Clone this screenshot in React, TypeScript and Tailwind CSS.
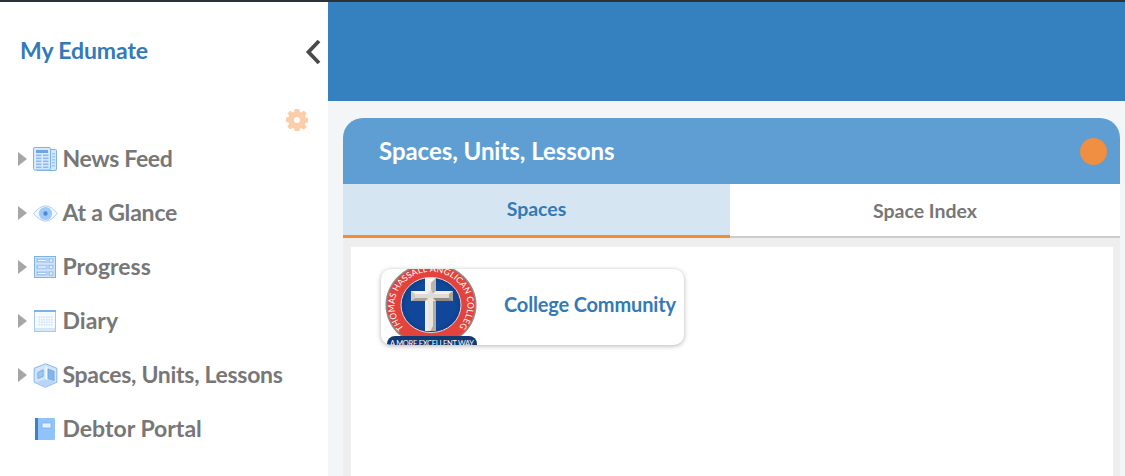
const Stroke = "#7fb2e8";

function NewsIcon() {
  return (
    <svg width="24" height="24" viewBox="0 0 24 24">
      <path d="M17 2.500h5.500a1 1 0 0 1 1 1V22a1.500 1.500 0 0 1-1.500 1.500H4" fill="#d5e7fb" stroke={Stroke} />
      <rect x="0.500" y="0.500" width="17" height="22.500" rx="1.500" fill="#d9eafc" stroke={Stroke} />
      <rect x="3" y="3" width="12" height="3" fill="#6ea5e2" />
      {[8, 11, 14, 17, 20].map((y) => (
        <g key={y}>
          <rect x="3" y={y - 0.5} width="5.500" height="1.600" fill="#8dbbee" />
          <rect x="10" y={y - 0.5} width="5.500" height="1.600" fill="#8dbbee" />
        </g>
      ))}
      {[6, 9, 12, 15, 18].map((y) => (
        <rect key={y} x="19" y={y} width="3" height="1.400" fill="#9cc5f1" />
      ))}
    </svg>
  );
}

function EyeIcon() {
  return (
    <svg width="25" height="17" viewBox="0 0 26 18">
      <path d="M0.700 9C5 3.500 9 1 13 1s8 2.500 12.300 8C21 14.500 17 17 13 17S5 14.500 0.700 9Z" fill="#f5faff" stroke="#8fbdee" strokeWidth="0.800" />
      <circle cx="13" cy="9" r="7" fill="#9ecbf9" />
      <circle cx="13" cy="9" r="2.300" fill="#4b8ad2" />
    </svg>
  );
}

function ProgressIcon() {
  return (
    <svg width="22" height="22" viewBox="0 0 22 22">
      <rect x="0.500" y="0.500" width="21" height="21" fill="#cfe3fa" stroke={Stroke} />
      {[2, 8.500, 15].map((y) => (
        <g key={y}>
          <rect x="2" y={y} width="18" height="5" fill="#b4d4f6" />
          <rect x="3.500" y={y + 1.500} width="9" height="2" fill="#f4f9ff" stroke="#7aa9df" strokeWidth="0.500" />
          <rect x="15.500" y={y + 1} width="3" height="3" fill="#e9f3fd" stroke="#7aa9df" strokeWidth="0.500" />
        </g>
      ))}
    </svg>
  );
}

function DiaryIcon() {
  const xs = [4.500, 7, 9.500, 12, 14.500, 17];
  return (
    <svg width="22" height="22" viewBox="0 0 22 22">
      <rect x="0.500" y="0.500" width="21" height="21" fill="#f5faff" stroke="#a4cbf3" />
      <rect x="0" y="0" width="22" height="2" fill="#7fb2e8" />
      <rect x="1" y="18" width="20" height="3" fill="#d3e6fa" />
      {xs.map((x) =>
        [6.500, 9, 11.500, 14].map((y) => (
          <rect key={`${x}-${y}`} x={x} y={y} width="1.600" height="1.600" fill="#d0e5fa" />
        ))
      )}
    </svg>
  );
}

function CubeIcon() {
  return (
    <svg width="25" height="25" viewBox="0 0 26 26">
      <path d="M13 0.800 24.800 5.500V20L13 25.200 1.200 20V5.500Z" fill="#d2e6fb" stroke={Stroke} />
      <path d="M13 3.500 15 4.500V18L13 20Z" fill="#f4f9ff" />
      <path d="M15.500 6 22 8.500V18.500L15.500 16.500Z" fill="#80b5ee" stroke="#5f97d8" strokeWidth="0.500" />
      <path d="M10.500 7 10.500 14 5 16V10Z" fill="#9fc8f3" stroke="#5f97d8" strokeWidth="0.700" />
      <path d="M2 20 13 16.800 24 20 13 25Z" fill="#b7d6f7" />
    </svg>
  );
}

function BookIcon() {
  return (
    <svg width="20" height="22" viewBox="0 0 20 22">
      <rect x="0" y="0" width="20" height="22" rx="1" fill="#90c3fa" />
      <rect x="0" y="0" width="3" height="22" fill="#3f7fc4" />
      <rect x="7" y="5" width="9" height="5" fill="#e4f0fc" stroke="#7aa9df" strokeWidth="0.700" />
    </svg>
  );
}

function Crest() {
  return (
    <svg width="104" height="76" viewBox="0 0 104 76" className="block shrink-0">
      <defs>
        <radialGradient id="crest-blue">
          <stop offset="0.8" stopColor="#10479a" />
          <stop offset="1" stopColor="#0d3f8c" />
        </radialGradient>
      </defs>
      <g transform="translate(50 36) scale(1 0.92)">
        <circle r="45.500" fill="#8f8a84" />
        <circle r="44" fill="#e2433c" />
        <circle r="30" fill="url(#crest-blue)" stroke="#eedbd6" strokeWidth="1" />
        <path id="crest-arc" d="M-27 25A36.500 36.500 0 1 1 27 25" fill="none" />
        <text fontFamily="Lato, sans-serif" fontSize="9" fill="#fff" textLength="172">
          <textPath href="#crest-arc">THOMAS HASSALL ANGLICAN COLLEGE</textPath>
        </text>
      </g>
      <path d="M44 9h11v13h17v10H55v30H44V32H30V22h14Z" fill="#dfdbd4" />
      <path d="M44 9h11l-5.500 5Z" fill="#f7f5f1" />
      <path d="M44 9v13l3 3 3-5v-6Z" fill="#f2efea" />
      <path d="M55 9v13l-3 3-2-5v-6Z" fill="#b9b4ad" />
      <path d="M30 22h14l3 3H34Z" fill="#f7f5f1" />
      <path d="M55 22h17l-4 3H52Z" fill="#f2efea" />
      <path d="M30 32l4-3h13l-3 3Z" fill="#a8a39c" />
      <path d="M72 32l-4-3H52l3 3Z" fill="#8f8a83" />
      <path d="M72 22v10l-4-3v-4Z" fill="#a8a39c" />
      <path d="M30 22v10l4-3v-4Z" fill="#d0ccc5" />
      <path d="M47 29h5v28l-2.500 4-2.500-4Z" fill="#e8e4de" />
      <path d="M52 32h3v30l-5.500 0 2.500-5Z" fill="#b0aba4" />
      <path d="M44 32h3v25l2.500 5H44Z" fill="#efece7" />
      <rect x="6" y="67" width="90" height="20" rx="8" fill="#123a73" />
      <text x="51" y="77" textAnchor="middle" fontFamily="Lato, sans-serif" fontSize="7.500" fill="#fff" textLength="84">
        A MORE EXCELLENT WAY
      </text>
    </svg>
  );
}

const items = [
  { label: "News Feed", icon: <NewsIcon />, arrow: true, spacing: "tracking-[-0.35px]" },
  { label: "At a Glance", icon: <EyeIcon />, arrow: true, spacing: "tracking-[-0.2px]" },
  { label: "Progress", icon: <ProgressIcon />, arrow: true, spacing: "" },
  { label: "Diary", icon: <DiaryIcon />, arrow: true, spacing: "" },
  { label: "Spaces, Units, Lessons", icon: <CubeIcon />, arrow: true, spacing: "tracking-[-0.3px]" },
  { label: "Debtor Portal", icon: <BookIcon />, arrow: false, spacing: "" },
];

export default function App() {
  return (
    <div className="h-[476px] w-[1125px] overflow-hidden bg-white font-['Lato',sans-serif]">
      <div className="h-[2px] bg-[#2d3238]" />
      <div className="flex h-[474px]">
        <aside className="flex w-[328px] shrink-0 flex-col bg-white">
          <div className="flex h-[99px] items-start justify-between pl-[20px] pr-[7px]">
            <span className="mt-[33px] text-[23px] leading-[30px] font-bold tracking-[-0.1px] text-[#337ab7]">My Edumate</span>
            <svg width="16" height="26" viewBox="0 0 16 26" className="mt-[37px]">
              <path d="M14 2 3.500 13 14 24" fill="none" stroke="#4a4a4a" strokeWidth="3.800" />
            </svg>
          </div>
          <div className="flex h-[31px] justify-end pr-[20px] pt-[8px]">
            <svg width="22" height="22" viewBox="0 0 24 24">
              <path
                fill="#fbcda9"
                fillRule="evenodd"
                d="M9.500 0h5l.6 3.200 1.700.7L19.500 2l3 3-1.900 2.700.7 1.700 3.200.6v4.500l-3.200.6-.7 1.700 1.900 2.700-3 3-2.700-1.900-1.700.7-.6 3.200h-5l-.6-3.200-1.700-.7L4.500 22l-3-3 1.900-2.700-.7-1.700L-.5 14v-4.500l3.200-.6.7-1.700L1.500 5l3-3 2.700 1.900 1.700-.7ZM12 8.700a3.300 3.300 0 1 0 0 6.600 3.300 3.300 0 0 0 0-6.600Z"
              />
            </svg>
          </div>
          <nav className="flex flex-col">
            {items.map((item) => (
              <div key={item.label} className="flex h-[54px] items-center">
                <div className="ml-[18px] w-[10px]">
                  {item.arrow && <div className="h-0 w-0 border-y-[7px] border-l-[9px] border-y-transparent border-l-[#a6a6a6]" />}
                </div>
                <div className="flex w-[34.500px] justify-center">{item.icon}</div>
                <span className={`mb-[2px] text-[23px] leading-[30px] font-bold text-[#777] ${item.spacing}`}>{item.label}</span>
              </div>
            ))}
          </nav>
        </aside>
        <main className="flex min-w-0 flex-1 flex-col bg-[#f4f5f7]">
          <div className="h-[99px] shrink-0 bg-[#3581bf]" />
          <section className="mt-[17px] ml-[15px] mr-[5px] flex flex-1 flex-col rounded-t-[20px] bg-[#eeeeee]">
            <div className="flex h-[66px] shrink-0 items-center justify-between rounded-t-[20px] bg-[#5f9ed3] pl-[36px] pr-[13px]">
              <h1 className="text-[24px] leading-[30px] font-bold tracking-[-0.05px] text-white">Spaces, Units, Lessons</h1>
              <div className="h-[27px] w-[27px] rounded-full bg-[#f08e42]" />
            </div>
            <div className="flex h-[54px] shrink-0">
              <div className="flex w-[387px] items-center justify-center border-b-[3px] border-[#f58a33] bg-[#d6e5f2] pb-[2px] text-[19.500px] font-bold text-[#337ab7]">
                Spaces
              </div>
              <div className="flex flex-1 items-center justify-center border-b-2 border-[#cccccc] bg-white pt-[1px] text-[19.500px] font-bold text-[#777]">
                Space Index
              </div>
            </div>
            <div className="ml-[8px] mr-[7px] mt-[9px] flex-1 bg-white pl-[30px] pt-[22px]">
              <div className="flex h-[76px] w-[303px] items-center overflow-hidden rounded-[10px] bg-white shadow-[0_1px_5px_rgba(0,0,0,0.3)]">
                <Crest />
                <span className="mb-[7px] ml-[19px] text-[20px] font-bold tracking-[-0.17px] text-[#337ab7]">College Community</span>
              </div>
            </div>
          </section>
        </main>
      </div>
    </div>
  );
}
